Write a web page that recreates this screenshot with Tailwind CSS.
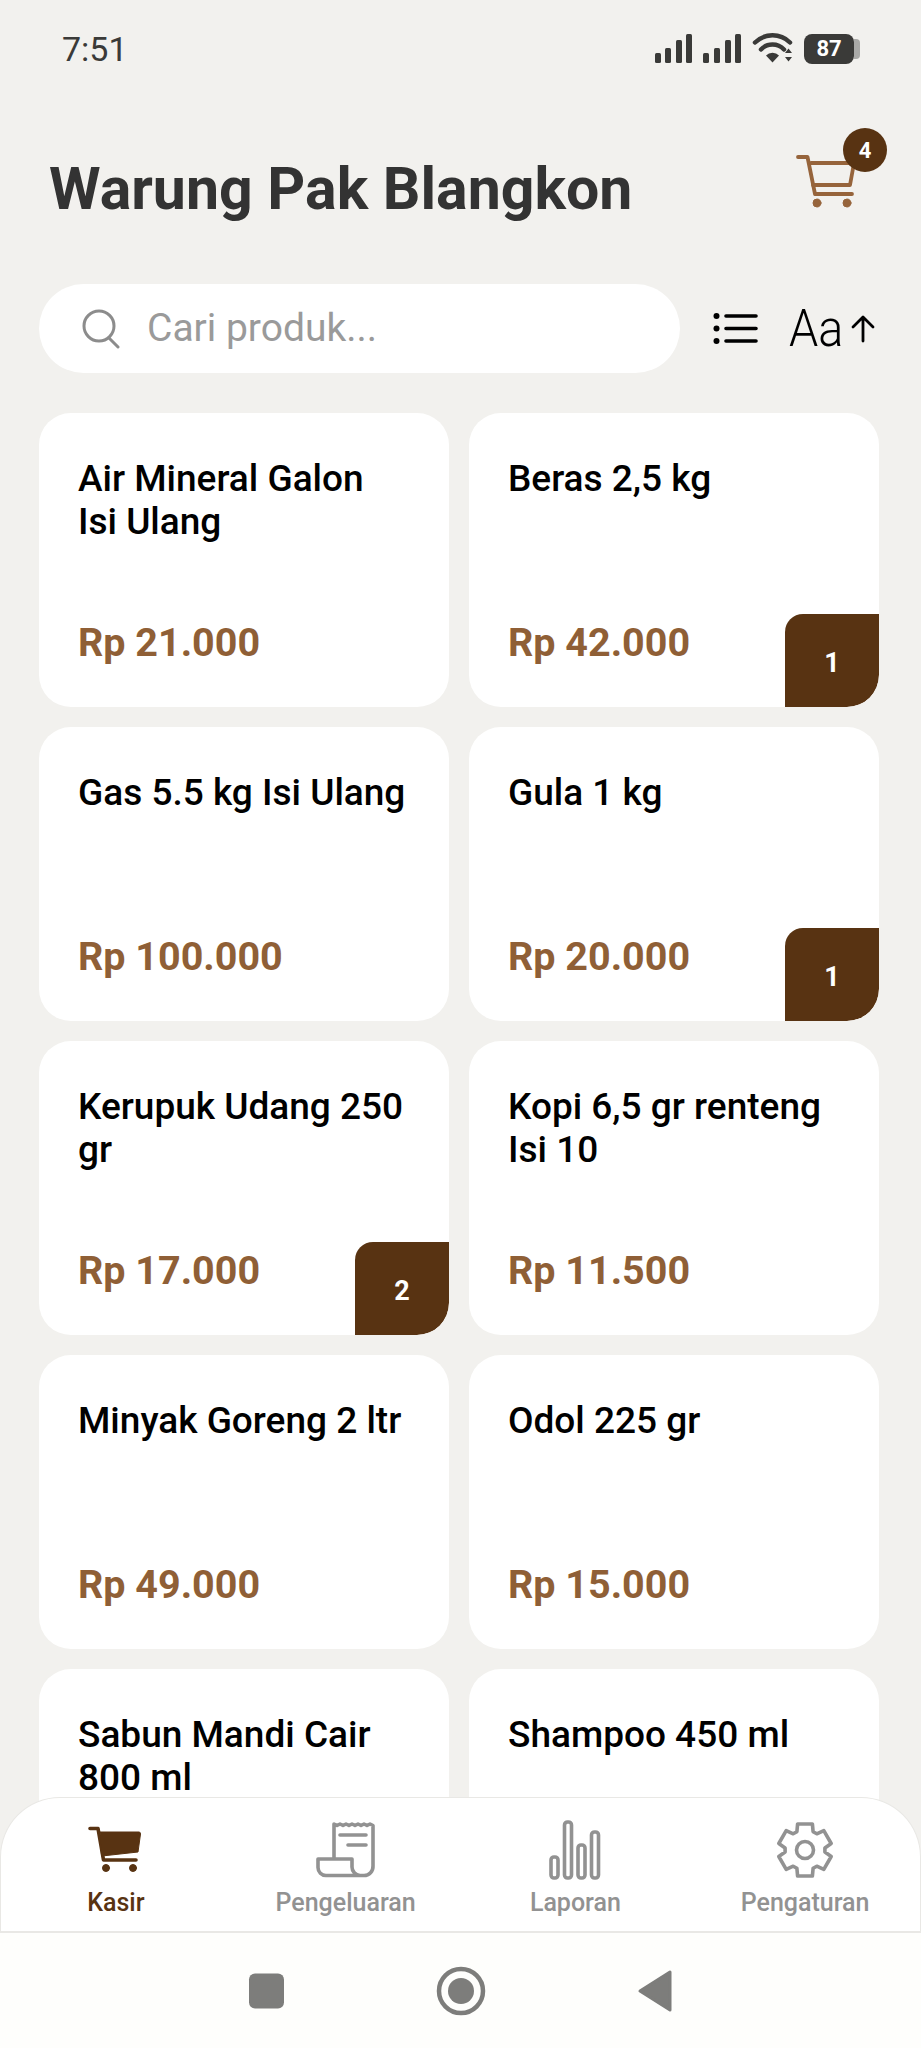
<!DOCTYPE html>
<html lang="en">
<head>
  <meta charset="UTF-8" />
  <meta name="viewport" content="width=device-width, initial-scale=1.0"/>
  <title>Warung Pak Blangkon</title>
  <script src="https://cdn.jsdelivr.net/npm/@tailwindcss/browser@4"></script>
</head>
<body class="bg-[#f2f1ee] font-['Roboto',sans-serif]">
  <div class="flex flex-col h-[2048px] w-[921px] overflow-hidden">

    <!-- status bar -->
    <div class="flex justify-between items-center h-[97px] pl-[62px] pr-[61px] text-[#3a3a38]">
      <span class="text-[34px] leading-none">7:51</span>
      <div class="flex items-center gap-[5px]">
        <svg width="146" height="32" viewBox="0 0 146 32" fill="#3a3a38">
          <rect x="0" y="20" width="6" height="10" rx="1.5"/><rect x="10" y="15" width="6" height="15" rx="1.5"/><rect x="21" y="7" width="6" height="23" rx="1.5"/><rect x="31" y="1" width="6" height="29" rx="1.5"/>
          <rect x="48" y="20" width="6" height="10" rx="1.5"/><rect x="59" y="15" width="6" height="15" rx="1.5"/><rect x="70" y="7" width="6" height="23" rx="1.5"/><rect x="80" y="1" width="6" height="29" rx="1.5"/>
          <path d="M100 9.5 a25 25 0 0 1 35 0 M106 16.5 a16 16 0 0 1 23 0" fill="none" stroke="#3a3a38" stroke-width="4.5" stroke-linecap="round"/>
          <path d="M111 22.5 a9 9 0 0 1 13 0 l-6.5 7z"/>
          <path d="M130 20l3.5-4.5 3.5 4.5z M130 24l3.5 4.5 3.5-4.5z"/>
        </svg>
        <div class="flex items-center -ml-[2px]">
          <div class="flex items-center justify-center w-[50px] h-[30px] rounded-[8px] bg-[#3a3a38] text-white text-[22px] font-bold leading-none">87</div>
          <div class="w-[6px] h-[20px] rounded-r-[4px] bg-[#a9a9a7]"></div>
        </div>
      </div>
    </div>

    <!-- header -->
    <div class="relative flex items-center h-[187px] pl-[49px] pb-[5px]">
      <h1 class="text-[59px] leading-none font-bold text-[#333333]">Warung Pak Blangkon</h1>
      <div class="absolute left-[796px] top-[28px] w-[96px] h-[90px]">
        <svg width="72" height="72" viewBox="0 0 72 72" class="absolute left-0 top-[24px]" fill="none" stroke="#96643b" stroke-width="3.8" stroke-linecap="round" stroke-linejoin="round">
          <path d="M2 8 H11.5 L19 45 H56"/>
          <path d="M15 14 H58 L54 36 H17"/>
          <circle cx="21" cy="54" r="4" fill="#96643b" stroke-width="1"/>
          <circle cx="51" cy="54" r="4" fill="#96643b" stroke-width="1"/>
        </svg>
        <div class="absolute left-[47px] top-[3px] flex items-center justify-center w-[44px] h-[44px] rounded-full bg-[#583312] text-white text-[22px] font-bold">4</div>
      </div>
    </div>

    <!-- search row -->
    <div class="flex items-center h-[89px] pl-[39px]">
      <div class="flex items-center w-[641px] h-full rounded-full bg-white pl-[42px]">
        <svg width="40" height="40" viewBox="0 0 40 40" fill="none" stroke="#8c8c8c" stroke-width="3" stroke-linecap="round">
          <circle cx="18" cy="17" r="15"/>
          <path d="M28 29 L37 38"/>
        </svg>
        <span class="ml-[26px] text-[39px] leading-none text-[#9a9a9a]">Cari produk...</span>
      </div>
      <svg width="46" height="34" viewBox="0 0 46 34" class="ml-[33px]" stroke="#000" stroke-width="3.6" stroke-linecap="round">
        <circle cx="3.5" cy="4" r="3" fill="#000" stroke="none"/><circle cx="3.5" cy="16.5" r="3" fill="#000" stroke="none"/><circle cx="3.5" cy="29" r="3" fill="#000" stroke="none"/>
        <path d="M13 4 H43 M13 16.5 H43 M13 29 H43"/>
      </svg>
      <span class="ml-[30px] text-[52px] leading-none font-light text-black scale-x-[0.9] origin-left">Aa</span>
      <svg width="26" height="28" viewBox="0 0 26 28" class="ml-[1px]" fill="none" stroke="#000" stroke-width="2.8" stroke-linecap="round" stroke-linejoin="round">
        <path d="M13 26 V3 M3 12 L13 2 L23 12"/>
      </svg>
    </div>

    <!-- products -->
    <div class="flex-1 min-h-0 pt-[40px] pl-[39px] pr-[42px]">
      <div class="grid grid-cols-2 gap-x-[20px] gap-y-[20px]">

        <div class="relative h-[294px] rounded-[32px] bg-white overflow-hidden pt-[44px] pl-[39px] pr-[42px]">
          <div class="text-[37px] leading-[43px] font-medium text-black">Air Mineral Galon Isi Ulang</div>
          <div class="absolute left-[39px] bottom-[40px] text-[39.5px] leading-[48px] font-bold text-[#8f5f36]">Rp 21.000</div>
        </div>

        <div class="relative h-[294px] rounded-[32px] bg-white overflow-hidden pt-[44px] pl-[39px] pr-[42px]">
          <div class="text-[37px] leading-[43px] font-medium text-black">Beras 2,5 kg</div>
          <div class="absolute left-[39px] bottom-[40px] text-[39.5px] leading-[48px] font-bold text-[#8f5f36]">Rp 42.000</div>
          <div class="absolute right-0 bottom-0 flex items-center justify-center w-[94px] h-[93px] pt-[6px] rounded-tl-[18px] rounded-br-[32px] bg-[#583312] text-white text-[27px] font-bold">1</div>
        </div>

        <div class="relative h-[294px] rounded-[32px] bg-white overflow-hidden pt-[44px] pl-[39px] pr-[42px]">
          <div class="text-[37px] leading-[43px] font-medium text-black">Gas 5.5 kg Isi Ulang</div>
          <div class="absolute left-[39px] bottom-[40px] text-[39.5px] leading-[48px] font-bold text-[#8f5f36]">Rp 100.000</div>
        </div>

        <div class="relative h-[294px] rounded-[32px] bg-white overflow-hidden pt-[44px] pl-[39px] pr-[42px]">
          <div class="text-[37px] leading-[43px] font-medium text-black">Gula 1 kg</div>
          <div class="absolute left-[39px] bottom-[40px] text-[39.5px] leading-[48px] font-bold text-[#8f5f36]">Rp 20.000</div>
          <div class="absolute right-0 bottom-0 flex items-center justify-center w-[94px] h-[93px] pt-[6px] rounded-tl-[18px] rounded-br-[32px] bg-[#583312] text-white text-[27px] font-bold">1</div>
        </div>

        <div class="relative h-[294px] rounded-[32px] bg-white overflow-hidden pt-[44px] pl-[39px] pr-[42px]">
          <div class="text-[37px] leading-[43px] font-medium text-black">Kerupuk Udang 250 gr</div>
          <div class="absolute left-[39px] bottom-[40px] text-[39.5px] leading-[48px] font-bold text-[#8f5f36]">Rp 17.000</div>
          <div class="absolute right-0 bottom-0 flex items-center justify-center w-[94px] h-[93px] pt-[6px] rounded-tl-[18px] rounded-br-[32px] bg-[#583312] text-white text-[27px] font-bold">2</div>
        </div>

        <div class="relative h-[294px] rounded-[32px] bg-white overflow-hidden pt-[44px] pl-[39px] pr-[42px]">
          <div class="text-[37px] leading-[43px] font-medium text-black">Kopi 6,5 gr renteng Isi 10</div>
          <div class="absolute left-[39px] bottom-[40px] text-[39.5px] leading-[48px] font-bold text-[#8f5f36]">Rp 11.500</div>
        </div>

        <div class="relative h-[294px] rounded-[32px] bg-white overflow-hidden pt-[44px] pl-[39px] pr-[42px]">
          <div class="text-[37px] leading-[43px] font-medium text-black">Minyak Goreng 2 ltr</div>
          <div class="absolute left-[39px] bottom-[40px] text-[39.5px] leading-[48px] font-bold text-[#8f5f36]">Rp 49.000</div>
        </div>

        <div class="relative h-[294px] rounded-[32px] bg-white overflow-hidden pt-[44px] pl-[39px] pr-[42px]">
          <div class="text-[37px] leading-[43px] font-medium text-black">Odol 225 gr</div>
          <div class="absolute left-[39px] bottom-[40px] text-[39.5px] leading-[48px] font-bold text-[#8f5f36]">Rp 15.000</div>
        </div>

        <div class="relative h-[294px] rounded-[32px] bg-white overflow-hidden pt-[44px] pl-[39px] pr-[42px]">
          <div class="text-[37px] leading-[43px] font-medium text-black">Sabun Mandi Cair 800 ml</div>
        </div>

        <div class="relative h-[294px] rounded-[32px] bg-white overflow-hidden pt-[44px] pl-[39px] pr-[42px]">
          <div class="text-[37px] leading-[43px] font-medium text-black">Shampoo 450 ml</div>
        </div>

      </div>
    </div>

    <!-- bottom tabs -->
    <div class="relative z-10 grid grid-cols-4 h-[136px] pt-[22px] rounded-t-[60px] bg-white border border-b-2 border-[#e9e8e5]">
      <div class="flex flex-col items-center">
        <svg width="60" height="60" viewBox="0 0 60 60" fill="none" stroke="#583312" stroke-linecap="round" stroke-linejoin="round">
          <path d="M4 8.5 H12 L17.5 40 H50" stroke-width="3.6"/>
          <path d="M14 12 H53 q1.5 0 1.5 2 L52 32 L16 36 z" fill="#583312" stroke-width="1"/>
          <circle cx="20" cy="48" r="3.5" fill="#583312" stroke-width="1"/>
          <circle cx="47" cy="48" r="3.5" fill="#583312" stroke-width="1"/>
        </svg>
        <span class="mt-[8px] text-[25px] leading-[30px] font-medium text-[#583312]">Kasir</span>
      </div>
      <div class="flex flex-col items-center">
        <svg width="60" height="60" viewBox="0 0 60 60" fill="none" stroke="#929292" stroke-width="3.6" stroke-linecap="round" stroke-linejoin="round">
          <path d="M18 38 V4 l3 1.5 3-1.5 3 1.5 3-1.5 3 1.5 3-1.5 3 1.5 3-1.5 3 1.5 3-1.5 3 1.5 3-1.5 3 1.5 V46 a9 9 0 0 1-9 9.5 H10 a8 8 0 0 1-8-8 V39 H36 V47 a8.5 8.5 0 0 0 8 8.5"/>
          <path d="M24 15 H50 M32 25 H50"/>
        </svg>
        <span class="mt-[8px] text-[25px] leading-[30px] font-medium text-[#929292]">Pengeluaran</span>
      </div>
      <div class="flex flex-col items-center">
        <svg width="60" height="60" viewBox="0 0 60 60" fill="none" stroke="#929292" stroke-width="3.6">
          <rect x="6" y="37" width="7" height="21" rx="3"/>
          <rect x="19.5" y="2" width="7" height="56" rx="3"/>
          <rect x="33" y="25" width="7" height="33" rx="3"/>
          <rect x="46.5" y="12" width="7" height="46" rx="3"/>
        </svg>
        <span class="mt-[8px] text-[25px] leading-[30px] font-medium text-[#929292]">Laporan</span>
      </div>
      <div class="flex flex-col items-center">
        <svg width="60" height="60" viewBox="0 0 60 60" fill="none" stroke="#929292" stroke-width="3.6" stroke-linejoin="round">
          <path d="M21.9 11.7 L22.6 4 H37.4 L38.1 11.7 L41.8 13.8 L48.8 10.6 L56.2 23.5 L49.9 27.9 V32.1 L56.2 36.5 L48.8 49.4 L41.8 46.2 L38.1 48.3 L37.4 56 H22.6 L21.9 48.3 L18.2 46.2 L11.2 49.4 L3.8 36.5 L10.1 32.1 V27.9 L3.8 23.5 L11.2 10.6 L18.2 13.8 Z"/>
          <circle cx="30" cy="30" r="8.5"/>
        </svg>
        <span class="mt-[8px] text-[25px] leading-[30px] font-medium text-[#929292]">Pengaturan</span>
      </div>
    </div>

    <!-- android nav -->
    <div class="relative z-10 flex items-center justify-center h-[115px] bg-[#fefefc]">
      <svg width="460" height="60" viewBox="0 0 460 60" fill="#7d7d7b">
        <rect x="18" y="12.5" width="35" height="35" rx="6"/>
        <circle cx="230" cy="30" r="22" fill="none" stroke="#7d7d7b" stroke-width="4.5"/>
        <circle cx="230" cy="30" r="13"/>
        <path d="M409 30 L439 11 V49 Z" stroke="#7d7d7b" stroke-width="3" stroke-linejoin="round"/>
      </svg>
    </div>
  </div>
</body>
</html>
